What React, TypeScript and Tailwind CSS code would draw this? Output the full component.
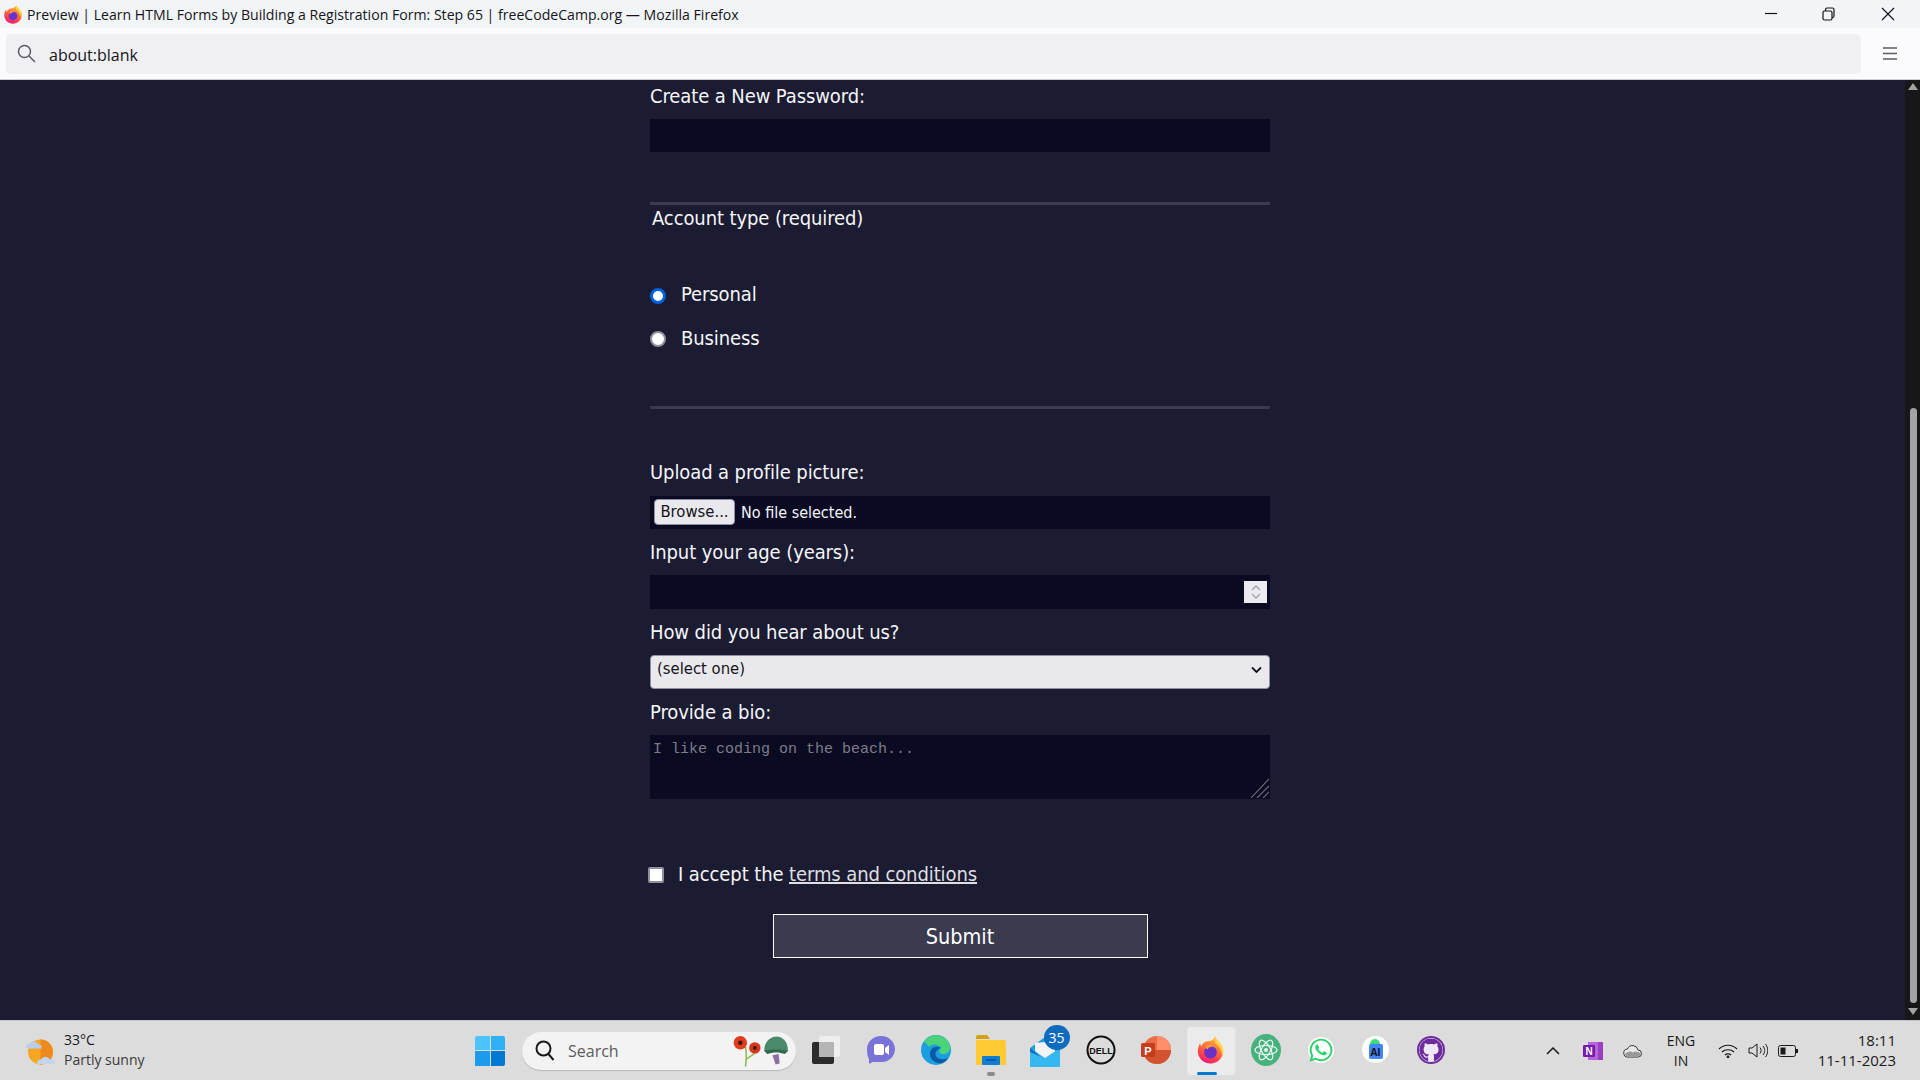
import { FaGithub, FaWhatsapp } from "react-icons/fa"

const uiFont = "font-['Open_Sans','Noto_Sans',sans-serif]"
const formFont = "font-['DejaVu_Sans',sans-serif]"
const labelClass = "block text-[20px] leading-[26px] font-stretch-condensed tracking-[-0.1px] text-[#f5f6f7]"
const fieldClass = "block w-full bg-[#0a0a23] border-0 outline-none"

const FirefoxLogo = ({ id, size }: { id: string; size: number }) => (
  <svg width={size} height={size} viewBox="0 0 32 32">
    <defs>
      <linearGradient id={id} x1="0.7" y1="0" x2="0.3" y2="1">
        <stop offset="0" stopColor="#ffc43d" />
        <stop offset="0.45" stopColor="#ff7139" />
        <stop offset="0.8" stopColor="#ff3750" />
        <stop offset="1" stopColor="#e31587" />
      </linearGradient>
    </defs>
    <path d="M21 1c.5 3.500 3 5 5 7.500 2.500 3 4 6 4 9.500 0 7.500-6.300 13.500-14 13.500S2 25.500 2 18c0-3.500 1-6.500 2.500-9 .2 1.500.8 2.700 1.700 3.300C7 9.500 9.500 7.500 12.500 7 15.500 6.500 20 6 21 1z" fill={`url(#${id})`} />
    <path d="M21 1c.5 3.500 3 5 5 7.500 2.500 3 4 6 4 9.500 0 2-.5 4-1.300 5.500C29 17 25 12 21.500 9 20.500 7 20.500 4 21 1z" fill="#ffd43b" />
    <circle cx="16" cy="19" r="7" fill="#6a32c9" />
    <path d="M10 13c3-2.500 8-2.500 11 .5-3-1-5.500-.5-7 .5l-1.500 2z" fill="#ff9a3c" />
  </svg>
)

const WeatherIcon = () => (
  <svg width="30" height="30" viewBox="0 0 30 30">
    <circle cx="15.500" cy="16" r="12.500" fill="#f5a623" />
    <path d="M15.500 3.500a12.500 12.500 0 0 1 0 25z" fill="#ee8a1d" />
    <path d="M1 11a3 3 0 0 1 3-3 5 5 0 0 1 9 0 3.500 3.500 0 0 1 3.500 3v1.500H1z" fill="#b9cdea" />
    <path d="M12 27a3.500 3.500 0 0 1 4-3.500 5 5 0 0 1 9 0 3.500 3.500 0 0 1 4.500 3.500v1H12z" fill="#c3d4ee" />
  </svg>
)

const StartIcon = () => (
  <div className="grid grid-cols-2 gap-[1px] w-[30px] h-[30px]">
    <div className="bg-[#4cc2ff] rounded-tl-[2px]" />
    <div className="bg-[#2fb0f5] rounded-tr-[2px]" />
    <div className="bg-[#1a9bec]" />
    <div className="bg-[#0078d4] rounded-br-[2px]" />
  </div>
)

const PoppyHelmet = () => (
  <svg width="58" height="32" viewBox="0 0 56 30">
    <path d="M14 11c1 6 1 12 0 19M26 15c-3 3-8 5-11 8" stroke="#8dbb4d" strokeWidth="1.500" fill="none" />
    <circle cx="9" cy="7" r="6.500" fill="#e23b1e" />
    <circle cx="9" cy="7" r="2.200" fill="#3a1a12" />
    <circle cx="23" cy="12" r="5.500" fill="#d9341c" />
    <circle cx="23" cy="12" r="1.800" fill="#3a1a12" />
    <path d="M32 15c0-9 6-14 12-14s11 5 11 14z" fill="#4a8a68" />
    <path d="M32 15c5-2 17-2 23 0l-3 3c-5-2-12-2-17 0z" fill="#2f6a4d" />
    <path d="M40 19l6-1 1 9-4 1z" fill="#8e6fa5" />
  </svg>
)

const TaskIcon = ({ children, active }: { children: React.ReactNode; active?: boolean }) => (
  <div className="relative flex items-center justify-center w-[55px] h-[48px]">
    {active && <div className="absolute left-[4px] top-0 w-[47px] h-[48px] bg-[#ebebeb] rounded-[4px] shadow-[2px_0_0_#e6e6e6]" />}
    <div className="relative mb-[2px] flex items-center justify-center">{children}</div>
    {active && <div className="absolute left-[14px] bottom-0 w-[20px] h-[3px] bg-[#0078d4] rounded-full" />}
  </div>
)

const Titlebar = () => (
  <div className={`flex items-center h-[28px] bg-[#f2f5f7] ${uiFont}`}>
    <div className="ml-[3px] flex items-center">
      <FirefoxLogo id="ff-title" size={20} />
    </div>
    <span className="ml-[4px] pt-[2px] text-[14.100px] leading-[28px] text-[#15141a] whitespace-nowrap">
      Preview | Learn HTML Forms by Building a Registration Form: Step 65 | freeCodeCamp.org — Mozilla Firefox
    </span>
    <svg className="ml-auto" width="155" height="28" viewBox="0 0 155 28" fill="none" stroke="#15141a" strokeWidth="1.200">
      <path d="M0 13.500h12" />
      <rect x="58" y="11" width="9" height="9" rx="1.500" />
      <path d="M60.500 11V9.500a1.500 1.500 0 0 1 1.500-1.500h5.500A1.500 1.500 0 0 1 69 9.500V16a1.500 1.500 0 0 1-1.500 1.500H67" />
      <path d="M117 8l12 12M129 8l-12 12" />
    </svg>
  </div>
)

const Toolbar = () => (
  <div className={`flex items-center h-[52px] bg-[#fbfbfe] border-b border-[#cfcfd8] ${uiFont}`}>
    <div className="ml-[6px] flex items-center w-[1855px] h-[40px] bg-[#f0f0f4] rounded-[5px]">
      <svg className="ml-[11px]" width="19" height="19" viewBox="0 0 19 19" fill="none" stroke="#5b5b66" strokeWidth="1.500">
        <circle cx="7.500" cy="7.500" r="6" />
        <path d="M12 12l6 6" />
      </svg>
      <span className="ml-[13px] pt-[3px] text-[16px] text-[#15141a]">about:blank</span>
    </div>
    <svg className="ml-[22px]" width="14" height="13" viewBox="0 0 14 13" stroke="#5b5b66" strokeWidth="1.300">
      <path d="M0 1h14M0 6.500h14M0 12h14" />
    </svg>
  </div>
)

const Scrollbar = () => (
  <div className="absolute right-0 top-0 bottom-0 w-[15px] bg-[#171717] rounded-tl-[6px] flex flex-col items-center">
    <div className="mt-[3px] w-0 h-0 border-l-[5.500px] border-r-[5.500px] border-b-[7px] border-l-transparent border-r-transparent border-b-[#a3a3a3]" />
    <div className="mt-[318px] ml-[1px] w-[7px] h-[595px] bg-[#a3a3a3] rounded-full" />
    <div className="mt-[5px] w-0 h-0 border-l-[5.500px] border-r-[5.500px] border-t-[7px] border-l-transparent border-r-transparent border-t-[#a3a3a3]" />
  </div>
)

const RadioRow = ({ label, checked }: { label: string; checked?: boolean }) => (
  <label className={`flex items-center h-[26px] ${labelClass}`}>
    <input
      type="radio"
      name="account-type"
      defaultChecked={checked}
      className={
        checked
          ? "appearance-none mt-[4px] w-[16px] h-[16px] rounded-full bg-white border-[3.500px] border-[#0060df]"
          : "appearance-none mt-[2px] w-[16px] h-[16px] rounded-full bg-white border-2 border-[#8f8f9d]"
      }
    />
    <span className="ml-[15px]">{label}</span>
  </label>
)

const RegistrationForm = () => (
  <form className={`w-[620px] mx-auto ${formFont}`}>
    <label className={`${labelClass} mt-[3px]`}>Create a New Password:</label>
    <input type="password" className={`${fieldClass} mt-[10px] h-[33px]`} />
    <div className="mt-[50px] border-t-[3px] border-[#3b3b4f]">
      <div className={`${labelClass} ml-[2px]`}>Account type (required)</div>
      <div className="mt-[50px] flex flex-col gap-[18px]">
        <RadioRow label="Personal" checked />
        <RadioRow label="Business" />
      </div>
    </div>
    <div className="mt-[55px] border-t-[3px] border-[#3b3b4f]" />
    <label className={`${labelClass} mt-[50px]`}>Upload a profile picture:</label>
    <div className={`${fieldClass} mt-[11px] h-[33px] flex items-center`}>
      <button type="button" className="ml-[4px] mb-[1px] w-[81px] h-[26px] bg-[#e9e9ed] border border-[#8f8f9d] rounded-[4px] text-[16.500px] leading-[22px] font-stretch-condensed text-[#15141a]">
        Browse...
      </button>
      <span className="ml-[6px] text-[16px] font-stretch-condensed text-[#f5f6f7]">No file selected.</span>
    </div>
    <label className={`${labelClass} mt-[10px]`}>Input your age (years):</label>
    <div className="relative mt-[10px]">
      <input type="text" className={`${fieldClass} h-[34px]`} />
      <div className="absolute right-[3px] top-[6px] w-[23px] h-[22px] bg-[#ecebf0] flex items-center justify-center">
        <svg width="12" height="16" viewBox="0 0 12 16" fill="none" stroke="#a7a6b0" strokeWidth="1.500">
          <path d="M2 6l4-4 4 4M2 10l4 4 4-4" />
        </svg>
      </div>
    </div>
    <label className={`${labelClass} mt-[10px]`}>How did you hear about us?</label>
    <div className="relative mt-[10px]">
      <select className="block w-full h-[34px] appearance-none bg-[#e9e9ed] border border-[#8f8f9d] rounded-[4px] pl-[6px] pb-[5px] text-[16.500px] font-stretch-condensed text-[#15141a] outline-none">
        <option>(select one)</option>
      </select>
      <svg className="absolute right-[8px] top-[11px]" width="11" height="8" viewBox="0 0 11 8" fill="none" stroke="#15141a" strokeWidth="1.800">
        <path d="M1 1.500l4.500 4.500 4.500-4.500" />
      </svg>
    </div>
    <label className={`${labelClass} mt-[10px]`}>Provide a bio:</label>
    <div className="relative mt-[10px]">
      <textarea
        placeholder="I like coding on the beach..."
        className={`${fieldClass} h-[64px] resize-none px-[3px] pt-[5px] pb-[1px] font-['Liberation_Mono',monospace] text-[15px] leading-[20px] text-[#f5f6f7] placeholder:text-[#7d7d88]`}
      />
      <svg className="absolute right-[1px] bottom-[1px]" width="18" height="20" viewBox="0 0 18 20" stroke="#6b6b75" strokeWidth="1.200">
        <path d="M0 20L18 1M6 20L18 8M12 20l6-6" />
      </svg>
    </div>
    <label className={`${labelClass} mt-[62px] -ml-[2px] flex items-center h-[26px]`}>
      <input type="checkbox" className="appearance-none mt-[2px] w-[16px] h-[16px] bg-white border-2 border-[#8f8f9d] rounded-[2px]" />
      <span className="ml-[14px]">
        I accept the <a href="#terms" className="underline text-[#dfdfe2]">terms and conditions</a>
      </span>
    </label>
    <button type="button" className="block mt-[27px] mx-auto w-[375px] h-[44px] pt-[3px] bg-[#3b3b4f] border border-white text-[21.500px] font-stretch-condensed text-white">
      Submit
    </button>
  </form>
)

const Taskbar = () => (
  <div className={`flex items-center h-[60px] bg-[#dcdcdc] border-t border-[#c4c4c4] ${uiFont}`}>
    <div className="ml-[25px] w-[30px]">
      <WeatherIcon />
    </div>
    <div className="ml-[9px] mb-[2px] w-[100px] text-[14px] leading-[20px] text-[#3a3a3a]">
      <div className="text-[#1a1a1a]">33°C</div>
      <div>Partly sunny</div>
    </div>
    <div className="ml-[311px]">
      <StartIcon />
    </div>
    <div className="ml-[17px] flex items-center w-[274px] h-[38px] bg-[#f3f3f3] rounded-full shadow-[0_1px_1px_#b8b8b8]">
      <svg className="ml-[13px]" width="20" height="21" viewBox="0 0 20 21" fill="none" stroke="#1a1a1a" strokeWidth="2">
        <circle cx="8.500" cy="8.500" r="7" />
        <path d="M13.500 14l5 6" />
      </svg>
      <span className="ml-[13px] text-[16px] text-[#5c5c5c]">Search</span>
      <div className="ml-auto mr-[7px]">
        <PoppyHelmet />
      </div>
    </div>
    <div className="ml-[2px] flex items-center">
      <TaskIcon>
        <svg width="30" height="30" viewBox="0 0 30 30">
          <rect x="1" y="7" width="22" height="22" rx="2" fill="#2b2b2b" />
          <rect x="8" y="1" width="21" height="21" rx="2" fill="#f2f2f2" opacity="0.8" />
          <rect x="8" y="7" width="15" height="15" fill="#b5b5b5" />
        </svg>
      </TaskIcon>
      <TaskIcon>
        <svg width="30" height="30" viewBox="0 0 30 30">
          <path d="M15 1c8 0 14 6 14 13s-6 13-13 13H6c-2 2-3 2-3 0v-3C1 21 1 17 1 14 1 7 7 1 15 1z" fill="#7b72d9" />
          <rect x="8" y="9" width="10" height="11" rx="2" fill="#fff" />
          <path d="M19 13l4-3v10l-4-3z" fill="#fff" />
        </svg>
      </TaskIcon>
      <TaskIcon>
        <svg width="30" height="32" viewBox="0 0 30 32">
          <circle cx="15" cy="16" r="15" fill="#1b9de2" />
          <path d="M3 8C8-1 25-2 29 12c1 5-3 9-8 8-4-1-3-4-1-6-2-4-9-5-12-1C6 9 4 9 3 8z" fill="#4bd37a" />
          <path d="M20 14c-5-3-11 0-11 6 0 6 6 10 12 9 3-1 5-3 6-5-4 2-10 2-12-2-2-3 1-7 5-8z" fill="#0c59a4" />
        </svg>
      </TaskIcon>
      <TaskIcon>
        <svg width="30" height="30" viewBox="0 0 30 30">
          <path d="M0 2a2 2 0 0 1 2-2h9l3 4h-14z" fill="#d9a006" />
          <path d="M0 5h28a2 2 0 0 1 2 2v23H0z" fill="#ffc933" />
          <rect x="6" y="21" width="18" height="9" rx="1" fill="#0f7fd6" />
          <path d="M10 25h10" stroke="#0b4f8f" strokeWidth="1.500" />
        </svg>
        <div className="absolute -bottom-[11px] left-[11px] w-[8px] h-[4px] rounded-full bg-[#8a8a8a]" />
      </TaskIcon>
      <TaskIcon>
        <svg width="30" height="30" viewBox="0 0 30 30" className="-ml-[2px] mt-[4px]">
          <path d="M0 11L15 0l15 11v19H0z" fill="#1b9de2" />
          <path d="M5 6l20-2v12l-10 6L5 14z" fill="#f4f4f4" />
          <path d="M0 11l15 10 15-10v19H0z" fill="#35b8f0" />
          <path d="M0 11v4l11 5z" fill="#0f6cbd" />
        </svg>
        <div className="absolute -top-[8px] left-[12px] w-[26px] h-[25px] bg-[#0f6cbd] rounded-full text-[14px] leading-[25px] text-center text-white">35</div>
      </TaskIcon>
      <TaskIcon>
        <svg width="30" height="30" viewBox="0 0 30 30">
          <circle cx="15" cy="15" r="13.500" fill="none" stroke="#111" strokeWidth="2" />
          <text x="15" y="18.500" textAnchor="middle" fontFamily="'Liberation Sans',sans-serif" fontWeight="700" fontSize="9" fill="#111">DELL</text>
        </svg>
      </TaskIcon>
      <TaskIcon>
        <svg width="30" height="30" viewBox="0 0 30 30">
          <circle cx="16" cy="15" r="14" fill="#ed6c47" />
          <path d="M16 1a14 14 0 0 1 14 14H16z" fill="#ff8f6b" />
          <path d="M30 15a14 14 0 0 1-28 0z" fill="#d35230" />
          <rect x="0" y="8" width="14" height="14" rx="1.500" fill="#c43e1c" />
          <text x="7" y="19.500" textAnchor="middle" fontFamily="'Liberation Sans',sans-serif" fontWeight="700" fontSize="11" fill="#fff">P</text>
        </svg>
      </TaskIcon>
      <TaskIcon active>
        <FirefoxLogo id="ff-task" size={29} />
      </TaskIcon>
      <TaskIcon>
        <svg width="30" height="32" viewBox="0 0 30 32">
          <ellipse cx="15" cy="16" rx="15" ry="16" fill="#47b27e" />
          <g fill="none" stroke="#eaf7f0" strokeWidth="1.200">
            <ellipse cx="15" cy="16" rx="11" ry="4.500" />
            <ellipse cx="15" cy="16" rx="11" ry="4.500" transform="rotate(60 15 16)" />
            <ellipse cx="15" cy="16" rx="11" ry="4.500" transform="rotate(120 15 16)" />
          </g>
          <circle cx="15" cy="16" r="2" fill="#eaf7f0" />
        </svg>
      </TaskIcon>
      <TaskIcon>
        <div className="w-[26px] h-[26px] rounded-full bg-white flex items-center justify-center">
          <FaWhatsapp size={26} color="#25d366" />
        </div>
      </TaskIcon>
      <TaskIcon>
        <div className="relative w-[27px] h-[27px] rounded-full bg-white flex items-center justify-center">
          <div className="w-[14px] h-[15px] mt-[3px] bg-[#4285f4] rounded-[2px] text-[10px] leading-[16px] font-bold text-center text-[#111]">AI</div>
          <div className="absolute top-[3px] left-[8px] w-[10px] h-[5px] rounded-t-full bg-[#3ddc84]" />
        </div>
      </TaskIcon>
      <TaskIcon>
        <div className="w-[28px] h-[28px] rounded-full bg-[#6e2b9c] flex items-center justify-center">
          <FaGithub size={24} color="#6e2b9c" className="bg-[#f0e9f5] rounded-full" />
        </div>
      </TaskIcon>
    </div>
    <div className="ml-auto flex items-center">
      <svg width="14" height="8" viewBox="0 0 14 8" fill="none" stroke="#1a1a1a" strokeWidth="1.500">
        <path d="M1 7l6-6 6 6" />
      </svg>
      <svg className="ml-[23px]" width="20" height="18" viewBox="0 0 20 18">
        <rect x="5" y="0" width="15" height="18" fill="#b565d9" />
        <rect x="15" y="0" width="5" height="18" fill="#9a3fc4" />
        <rect x="0" y="3" width="12" height="12" rx="1" fill="#7719aa" />
        <text x="6" y="13" textAnchor="middle" fontFamily="'Liberation Sans',sans-serif" fontWeight="700" fontSize="10" fill="#fff">N</text>
      </svg>
      <svg className="ml-[20px]" width="20" height="14" viewBox="0 0 20 14">
        <path d="M5 13a4 4 0 0 1-.5-8A5.500 5.500 0 0 1 15 6a3.500 3.500 0 0 1 0 7z" fill="#e8e8e8" stroke="#333" strokeWidth="1" />
        <path d="M2 10c3-3 6-3 8-1.500 2-1.500 5-1.500 8 1.500-1 2-2 3-3 3H5c-1.500 0-2.500-1-3-3z" fill="#9a9a9a" />
      </svg>
      <div className="ml-[19px] w-[38px] text-center text-[14px] leading-[20px] text-[#1a1a1a]">
        <div>ENG</div>
        <div>IN</div>
      </div>
      <svg className="ml-[18px]" width="20" height="14" viewBox="0 0 20 14" fill="none" stroke="#1a1a1a" strokeWidth="1.200">
        <path d="M1 5c5-5 13-5 18 0M4 8c3-3 9-3 12 0M7 11c1.500-1.500 4.500-1.500 6 0" />
        <circle cx="10" cy="13" r="0.800" fill="#1a1a1a" />
      </svg>
      <svg className="ml-[10px]" width="20" height="15" viewBox="0 0 20 15" fill="none" stroke="#1a1a1a" strokeWidth="1">
        <path d="M1 5h3l5-4v13l-5-4H1z" />
        <path d="M12 4.500c1.500 2 1.500 4 0 6M15 3c2.200 3 2.200 6 0 9M17.500 1c3 4 3 9 0 13" />
      </svg>
      <svg className="ml-[10px]" width="20" height="12" viewBox="0 0 20 12" fill="none" stroke="#1a1a1a" strokeWidth="1">
        <rect x="0.500" y="0.500" width="17" height="11" rx="2" />
        <rect x="2.500" y="2.500" width="5" height="7" fill="#1a1a1a" stroke="none" />
        <rect x="18" y="4" width="2" height="4" fill="#1a1a1a" stroke="none" />
      </svg>
      <div className="ml-[14px] mb-[2px] mr-[24px] w-[84px] text-right text-[15px] leading-[20px] text-[#1a1a1a]">
        <div>18:11</div>
        <div>11-11-2023</div>
      </div>
    </div>
  </div>
)

export default function App() {
  return (
    <div className="flex flex-col h-screen overflow-hidden bg-[#1b1b32]">
      <Titlebar />
      <Toolbar />
      <main className="relative flex-1 overflow-hidden bg-[#1b1b32]">
        <RegistrationForm />
        <Scrollbar />
      </main>
      <Taskbar />
    </div>
  )
}
